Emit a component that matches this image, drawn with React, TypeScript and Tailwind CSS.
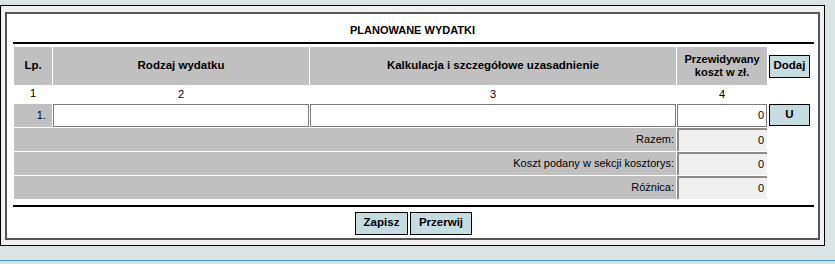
import React from 'react';

const FONT = "font-['Liberation_Sans',Arial,sans-serif]";

const SUMMARY = ["Razem:", "Koszt podany w sekcji kosztorys:", "Różnica:"];

function Btn({ label, className = "" }: { label: string; className?: string }) {
  return (
    <div
      className={`flex items-center justify-center bg-[#c5dce0] border border-black text-[11.5px] font-bold text-black ${className}`}
    >
      {label}
    </div>
  );
}

export default function App() {
  return (
    <div className={`w-[835px] h-[264px] bg-[#dae4e4] pt-[5px] text-black ${FONT}`}>
      {/* ── Outer frame ───────────────────────────────────────────── */}
      <div className="w-[825px] h-[241px] border border-black bg-[#f0f0f0] px-[4px] pt-[6px]">
        <div className="h-[228px] border-2 border-[#555555] bg-white">
          {/* Title */}
          <div className="h-[28px] flex items-center justify-center pt-[4px] text-[11px] font-bold">
            PLANOWANE WYDATKI
          </div>
          <div className="ml-[6px] w-[801px] h-[2px] bg-black" />

          {/* ── Table ───────────────────────────────────────────── */}
          <div className="ml-[7px] mt-[3px] grid grid-cols-[38px_256px_366px_90px_43px] gap-[1px] text-[11px]">
            {/* header */}
            <div className="h-[38px] bg-[#c0c0c0] flex items-center justify-center font-bold text-[11.5px]">Lp.</div>
            <div className="bg-[#c0c0c0] flex items-center justify-center font-bold text-[11.5px]">Rodzaj wydatku</div>
            <div className="bg-[#c0c0c0] flex items-center justify-center font-bold text-[11.5px]">
              Kalkulacja i szczegółowe uzasadnienie
            </div>
            <div className="bg-[#c0c0c0] flex flex-col items-center justify-center font-bold leading-[13px] text-center">
              <span>Przewidywany</span>
              <span>koszt w zł.</span>
            </div>
            <div className="flex items-center">
              <Btn label="Dodaj" className="ml-[1px] w-[41px] h-[23px]" />
            </div>

            {/* column numbers */}
            <div className="h-[15px] flex items-center justify-center">1</div>
            <div className="flex items-center justify-center">2</div>
            <div className="flex items-center justify-center">3</div>
            <div className="flex items-center justify-center">4</div>
            <div />

            {/* data row */}
            <div className="h-[23px] bg-[#c0c0c0] flex items-center justify-end pr-[6px]">1.</div>
            <div className="border border-[#7a7a7a] bg-white" />
            <div className="border border-[#7a7a7a] bg-white" />
            <div className="border border-[#7a7a7a] bg-white flex items-center justify-end pr-[2px]">0</div>
            <div className="flex items-start">
              <Btn label="U" className="ml-[1px] w-[41px] h-[22px]" />
            </div>

            {/* summary rows */}
            {SUMMARY.map((label) => (
              <React.Fragment key={label}>
                <div className="col-span-3 h-[23px] bg-[#c0c0c0] flex items-center justify-end pr-[2px]">
                  {label}
                </div>
                <div className="bg-[#f0f0f0] border-t-2 border-l-2 border-[#8c8c8c] flex items-center justify-end pr-[3px]">
                  0
                </div>
                <div />
              </React.Fragment>
            ))}
          </div>

          <div className="ml-[6px] mt-[6px] w-[801px] h-[2px] bg-black" />

          {/* ── Actions ─────────────────────────────────────────── */}
          <div className="mt-[5px] flex justify-center gap-[2px] pl-[2px]">
            <Btn label="Zapisz" className="w-[53px] h-[23px]" />
            <Btn label="Przerwij" className="w-[62px] h-[23px]" />
          </div>
        </div>
      </div>
      <div className="mt-[14px] h-[1px] bg-[#3a9ae0]" />
    </div>
  );
}
